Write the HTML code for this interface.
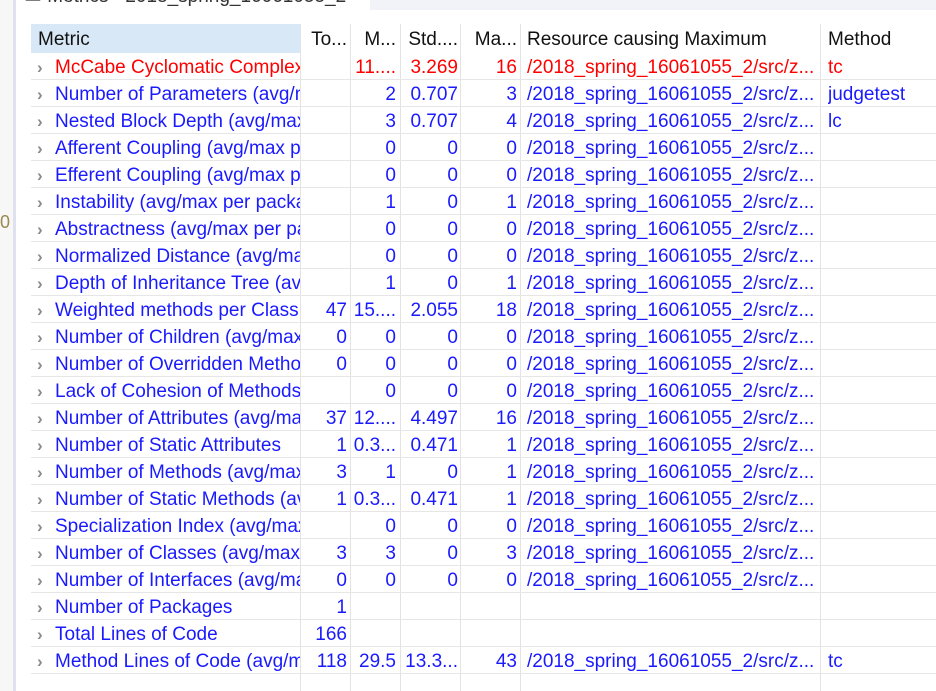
<!DOCTYPE html>
<html><head><meta charset="utf-8"><style>
*{margin:0;padding:0;box-sizing:border-box}
body{width:936px;height:691px;overflow:hidden;background:#fff;font-family:"Liberation Sans","Noto Sans CJK SC",sans-serif;font-size:19px;position:relative}
.abs{position:absolute}
.row{position:absolute;left:31px;width:905px;height:27px;border-bottom:1px solid #e6e6e6}
.c{position:absolute;top:1px;height:26px;line-height:27px;white-space:nowrap;overflow:hidden}
.r{text-align:right}
.vl{position:absolute;top:24px;height:667px;width:1px;background:#e3e3e3}
.arr{position:absolute;left:6px;top:1px;line-height:27px;color:#8a8a8a;font-size:17px;font-weight:bold}
</style></head><body>
<div class="abs" style="left:0;top:0;width:13px;height:691px;background:#f7f7f7"></div>
<div class="abs" style="left:13px;top:0;width:3px;height:691px;background:#dfe2ee"></div>
<div class="abs" style="left:370px;top:0;width:566px;height:10px;background:#f2f3f8"></div>
<div class="abs" style="left:0;top:213px;color:#9a8a50;font-size:18px;line-height:18px">0</div>
<div class="abs" style="left:24px;top:-13px;color:#333;font-size:19px;line-height:20px">▭ Metrics - 2018_spring_16061055_2</div>
<div class="abs" style="left:31px;top:24px;width:269px;height:29px;background:#d9e8f7"></div>
<div class="vl" style="left:300px"></div><div class="vl" style="left:350px"></div><div class="vl" style="left:400px"></div><div class="vl" style="left:460px"></div><div class="vl" style="left:520px"></div><div class="vl" style="left:820px"></div>
<div id="t"></div>
<script>
var cols=[[24,245,0],[270,46,1],[320,45,1],[371,56,1],[431,55,1],[496,292,0],[797,110,0]];
var H=[["Metric"],["To..."],["M..."],["Std...."],["Ma..."],["Resource causing Maximum"],["Method"]];
var R="/2018_spring_16061055_2/src/z...";
var d=[
["McCabe Cyclomatic Complexity","","11....","3.269","16",R,"tc"],
["Number of Parameters (avg/max","","2","0.707","3",R,"judgetest"],
["Nested Block Depth (avg/max","","3","0.707","4",R,"lc"],
["Afferent Coupling (avg/max per","","0","0","0",R,""],
["Efferent Coupling (avg/max per","","0","0","0",R,""],
["Instability (avg/max per package","","1","0","1",R,""],
["Abstractness (avg/max per package","","0","0","0",R,""],
["Normalized Distance (avg/max","","0","0","0",R,""],
["Depth of Inheritance Tree (avg","","1","0","1",R,""],
["Weighted methods per Class","47","15....","2.055","18",R,""],
["Number of Children (avg/max","0","0","0","0",R,""],
["Number of Overridden Methods","0","0","0","0",R,""],
["Lack of Cohesion of Methods","","0","0","0",R,""],
["Number of Attributes (avg/max","37","12....","4.497","16",R,""],
["Number of Static Attributes","1","0.3...","0.471","1",R,""],
["Number of Methods (avg/max","3","1","0","1",R,""],
["Number of Static Methods (avg","1","0.3...","0.471","1",R,""],
["Specialization Index (avg/max","","0","0","0",R,""],
["Number of Classes (avg/max","3","3","0","3",R,""],
["Number of Interfaces (avg/max","0","0","0","0",R,""],
["Number of Packages","1","","","","",""],
["Total Lines of Code","166","","","","",""],
["Method Lines of Code (avg/max","118","29.5","13.3...","43",R,"tc"]];
var h='<div class="row" style="top:24px;height:29px;border:none">';
H.forEach(function(x,i){var c=cols[i];h+='<div class="c" style="left:'+(i==0?7:c[0])+'px;width:'+c[1]+'px;line-height:29px;color:#111'+(i>0&&i<5?';text-align:right':'')+'">'+x[0]+'</div>'});
h+='</div>';
d.forEach(function(r,k){var col=k==0?'#f00':'#1a1aff';
h+='<div class="row" style="top:'+(53+k*27)+'px;color:'+col+'"><div class="arr">›</div>';
r.forEach(function(x,i){var c=cols[i];h+='<div class="c'+(c[2]?' r':'')+'" style="left:'+c[0]+'px;width:'+c[1]+'px">'+x+'</div>'});
h+='</div>'});
document.getElementById('t').innerHTML=h;
</script>
</body></html>
